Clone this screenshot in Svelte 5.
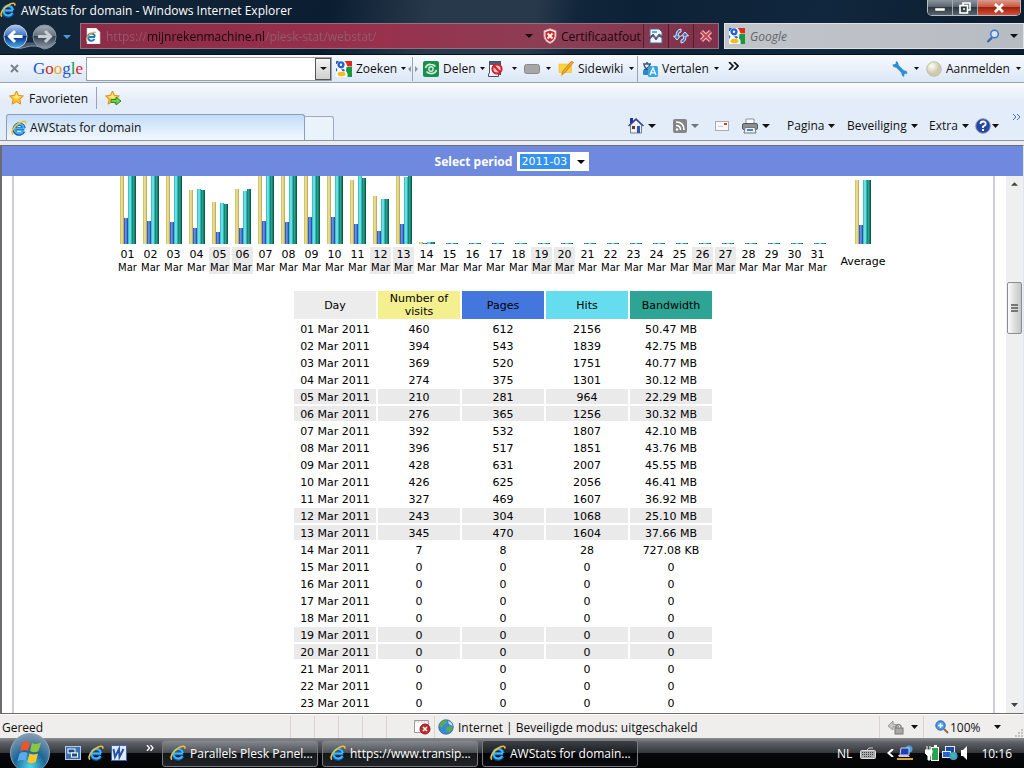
<script>
  const days = [
    { visits: 460, pages: 612, hits: 2156, bandwidth: '50.47 MB', bars: [76, 26, 76, 76] },
    { visits: 394, pages: 543, hits: 1839, bandwidth: '42.75 MB', bars: [76, 23, 76, 76] },
    { visits: 369, pages: 520, hits: 1751, bandwidth: '40.77 MB', bars: [74, 22, 74, 74] },
    { visits: 274, pages: 375, hits: 1301, bandwidth: '30.12 MB', bars: [54, 16, 55, 54] },
    { visits: 210, pages: 281, hits: 964, bandwidth: '22.29 MB', bars: [42, 12, 41, 40] },
    { visits: 276, pages: 365, hits: 1256, bandwidth: '30.32 MB', bars: [55, 16, 53, 55] },
    { visits: 392, pages: 532, hits: 1807, bandwidth: '42.10 MB', bars: [76, 23, 76, 76] },
    { visits: 396, pages: 517, hits: 1851, bandwidth: '43.76 MB', bars: [76, 22, 76, 76] },
    { visits: 428, pages: 631, hits: 2007, bandwidth: '45.55 MB', bars: [76, 27, 76, 76] },
    { visits: 426, pages: 625, hits: 2056, bandwidth: '46.41 MB', bars: [76, 27, 76, 76] },
    { visits: 327, pages: 469, hits: 1607, bandwidth: '36.92 MB', bars: [64, 20, 68, 66] },
    { visits: 243, pages: 304, hits: 1068, bandwidth: '25.10 MB', bars: [48, 13, 45, 45] },
    { visits: 345, pages: 470, hits: 1604, bandwidth: '37.66 MB', bars: [68, 20, 67, 68] },
    { visits: 7, pages: 8, hits: 28, bandwidth: '727.08 KB', bars: [2, 1, 2, 2] }
  ];
  const empty = { visits: 0, pages: 0, hits: 0, bandwidth: '0', bars: [0, 1, 1, 1] };

  const month = Array.from({ length: 31 }, (_, i) => ({
    day: String(i + 1).padStart(2, '0'),
    weekend: [0, 6].includes(new Date(2011, 2, i + 1).getDay()),
    ...(days[i] ?? empty)
  }));

  const colors = ['visits', 'pages', 'hits', 'bandwidth'];
  const average = [64, 19, 64, 64];
  const tasks = ['Parallels Plesk Panel...', 'https://www.transip...', 'AWStats for domain...'];

  let url = $state('https://mijnrekenmachine.nl/plesk-stat/webstat/');
  let query = $state('');
  let term = $state('');
  let period = $state('2011-03');
  let activeTask = $state(2);
</script>

{#snippet ie()}
  <svg width="16" height="16" viewBox="0 0 16 16" aria-hidden="true">
    <path d="M3.4 8.8h9.9M12.7 11.2A5 5 0 1 1 13.1 8.3" fill="none" stroke="#0b58a8" stroke-width="3.4" />
    <path d="M4 8.6h9M12.4 11A4.8 4.8 0 1 1 12.9 8" fill="none" stroke="#45b4f3" stroke-width="2" />
    <path d="M2 14.6C-.6 12.6 2.6 6.4 8 3.2 12 .8 15.4.4 14.8 3.6" fill="none" stroke="#f5c02c" stroke-width="1.6" />
  </svg>
{/snippet}

{#snippet arrow(size = 7, color = '#111')}
  <svg class="arrow" width={size} height="4" viewBox="0 0 8 4" preserveAspectRatio="none" aria-hidden="true">
    <path d="M0 0h8L4 4z" fill={color} />
  </svg>
{/snippet}

{#snippet google()}
  <svg width="16" height="16" viewBox="0 0 16 16" aria-hidden="true">
    <rect width="16" height="16" fill="#fff" />
    <path d="M8.5 0H16v5.500h-4.500Q11 2 8.500 0z" fill="#e5281e" />
    <path d="M10.500 6H16v10h-4.500q1-3-1.500-6z" fill="#159a3c" />
    <path d="M0 0h3L1 3H0z" fill="#2c62cf" />
    <circle cx="5" cy="3.800" r="2.400" fill="none" stroke="#2563d4" stroke-width="2.400" />
    <path d="M0 6.500L1.500 9 0 11z" fill="#2c62cf" />
    <path d="M5 8.500l3-.5 1 2-2 .5z" fill="#2563d4" />
    <ellipse cx="5.500" cy="13" rx="4" ry="2.300" fill="#f6bc1a" />
  </svg>
{/snippet}

{#snippet star()}
  <path d="M7.5 1l2 4.4 4.8.6-3.5 3.3.9 4.8-4.2-2.4-4.3 2.4.9-4.8L.6 6l4.8-.6z" fill="#ffc62b" stroke="#e08a18" />
  <path d="M7.5 3l1.3 3.2 3.4.4-4.7 2.2L3 6.7l3.2-.5z" fill="#ffe88a" />
{/snippet}

{#snippet bars(heights)}
  <div class="bars">
    {#each heights as h, i}
      <span class="bar {colors[i]}" style="height: {h}px"></span>
    {/each}
  </div>
{/snippet}

<div class="window">
  <div class="glass">
    <header class="titlebar">
      {@render ie()}
      <h1>AWStats for domain - Windows Internet Explorer</h1>
      <div class="caption">
        <button aria-label="Minimaliseren">
          <svg width="12" height="12" viewBox="0 0 12 12"><rect x="1" y="6" width="10" height="3" fill="#fff" stroke="#444" stroke-width=".5" /></svg>
        </button>
        <button aria-label="Verkleinen">
          <svg width="12" height="12" viewBox="0 0 12 12" fill="none" stroke="#fff" stroke-width="1.6"><path d="M4 3V1h7v7H9" /><rect x="1" y="3.5" width="7.5" height="7.5" /><path d="M4 7h2" /></svg>
        </button>
        <button class="close" aria-label="Sluiten">
          <svg width="12" height="12" viewBox="0 0 12 12"><path d="M2 2l8 8M10 2l-8 8" stroke="#fff" stroke-width="2.6" /></svg>
        </button>
      </div>
    </header>

    <div class="navigation">
      <div class="travel">
        <svg width="76" height="28" viewBox="0 0 76 28" aria-hidden="true">
          <defs>
            <linearGradient id="back" x2="0" y2="1"><stop stop-color="#a9c8ee" /><stop offset=".45" stop-color="#3f74c4" /><stop offset=".5" stop-color="#082d84" /><stop offset="1" stop-color="#43b6f3" /></linearGradient>
            <linearGradient id="forward" x2="0" y2="1"><stop stop-color="#a3adb8" /><stop offset=".48" stop-color="#67727e" /><stop offset=".5" stop-color="#36424f" /><stop offset="1" stop-color="#8b98a4" /></linearGradient>
          </defs>
          <path d="M8 20q8 8 18 4 10-3 18 2 8-1 12-7" fill="#4b5b6b" stroke="#8997a6" />
          <circle cx="15.5" cy="13.500" r="11.500" fill="url(#back)" stroke="#bdcde0" />
          <circle cx="44.500" cy="13.500" r="11.500" fill="url(#forward)" stroke="#8493a1" />
          <path d="M22.500 13.500H10M15 8l-5.500 5.500L15 19" fill="none" stroke="#fff" stroke-width="3" />
          <path d="M38 13.500h12.500M45 8l5.500 5.500L45 19" fill="none" stroke="#c6ced6" stroke-width="3" />
          <path d="M63 12h8l-4 4z" fill="#4d9bd8" />
        </svg>
      </div>
      <div class="address">
        <svg width="16" height="16" viewBox="0 0 16 16" aria-hidden="true">
          <path d="M2 0h9l4 4v12H2z" fill="#fff" stroke="#c9c9c9" stroke-width=".6" />
          <path d="M3 9h7M9.500 11A3.600 3.600 0 1 1 10 8.600" fill="none" stroke="#1c78c8" stroke-width="1.900" />
          <path d="M1.500 13Q1 9 6 5.500 10 3 11 5" fill="none" stroke="#f0b52a" stroke-width="1.100" />
        </svg>
        <input class="url" aria-label="Adres" bind:value={url} />
        {@render arrow(8)}
        <button class="certificate">
          <svg width="14" height="16" viewBox="0 0 14 16" aria-hidden="true">
            <path d="M7 .8l6 2v5q0 5-6 7.600Q1 12.800 1 7.800v-5z" fill="#fff" stroke="#c8a5a5" />
            <path d="M7 2.500l4.600 1.500v4q0 3.800-4.600 6-4.600-2.200-4.600-6V4z" fill="#d4262d" />
            <path d="M4.500 5.500l5 5M9.500 5.500l-5 5" stroke="#fff" stroke-width="1.800" />
          </svg>
          Certificaatfout
        </button>
        <button class="square" aria-label="Compatibiliteitsweergave">
          <svg width="14" height="16" viewBox="0 0 14 16"><path d="M1 1h9l3 3v4l-3-2-3 4-3-4-3 3z" fill="#eef5fb" stroke="#4b6b90" /><path d="M1 11l3-3 3 4 3-4 3 2v5H1z" fill="#eef5fb" stroke="#4b6b90" /><path d="M3 3h5v2H3z" fill="#56aee0" /></svg>
        </button>
        <button class="square" aria-label="Vernieuwen">
          <svg width="16" height="16" viewBox="0 0 16 16" stroke="#e6f0fc" stroke-width=".9" fill="#3e78c8"><path d="M8 1v3Q5 4 5 8h2.500L4 12 .5 8H3Q3 1.500 8 1z" /><path d="M8 15v-3q3 0 3-4H8.500L12 4l3.500 4H13q0 6.500-5 7z" /></svg>
        </button>
        <button class="square" aria-label="Stoppen">
          <svg width="14" height="14" viewBox="0 0 14 14"><path d="M2.500 2.500l9 9M11.500 2.500l-9 9" stroke="#f1c7c7" stroke-width="4.200" /><path d="M2.500 2.500l9 9M11.500 2.500l-9 9" stroke="#c54850" stroke-width="2.200" /></svg>
        </button>
      </div>
      <div class="search">
        {@render google()}
        <input aria-label="Zoeken" placeholder="Google" bind:value={query} />
        <svg width="14" height="14" viewBox="0 0 14 14" aria-hidden="true"><path d="M6 8.500L1.500 13" stroke="#3566b5" stroke-width="2.400" /><circle cx="8.500" cy="5" r="3.800" fill="#d5e6f8" stroke="#3f75c6" stroke-width="1.500" /></svg>
        {@render arrow(8)}
      </div>
    </div>
  </div>

  <div class="google-bar">
    <button class="dismiss" aria-label="Werkbalk sluiten">
      <svg width="9" height="9" viewBox="0 0 9 9"><path d="M1 1l7 7M8 1L1 8" stroke="#7c8087" stroke-width="2" /></svg>
    </button>
    <div class="logo"><span class="blue">G</span><span class="red">o</span><span class="yellow">o</span><span class="blue">g</span><span class="green">l</span><span class="red">e</span></div>
    <div class="combo">
      <input aria-label="Google zoekterm" bind:value={term} />
      <button aria-label="Zoekgeschiedenis">{@render arrow(7)}</button>
    </div>
    <button class="tool">{@render google()}Zoeken{@render arrow(5)}</button>
    <svg width="12" height="24" viewBox="0 0 12 24" aria-hidden="true"><path d="M5.500 0v24" stroke="#9da5b0" /><path d="M4 9v6l-3-3zM8 9v6l3-3z" fill="#8d949d" /></svg>
    <button class="tool">
      <svg width="16" height="16" viewBox="0 0 16 16" aria-hidden="true"><rect width="16" height="16" rx="2" fill="#1b8f49" /><path d="M2.500 7Q4 3 8 3.500q3 0 4.500 2M13.500 9q-1.500 4-5.500 3.500-3 0-4.500-2" fill="none" stroke="#d2f0dc" stroke-width="1.700" /><circle cx="8" cy="8" r="2.200" fill="none" stroke="#d2f0dc" stroke-width="1.400" /></svg>
      Delen{@render arrow(5)}
    </button>
    <button class="tool" aria-label="Pop-ups">
      <svg width="16" height="16" viewBox="0 0 16 16" aria-hidden="true"><rect x="1.500" y=".5" width="11" height="13" fill="#fff" stroke="#44536c" /><path d="M2 1h10v3H2z" fill="#4a5e83" /><path d="M.5 12.500v3h10v-3" fill="#eef" stroke="#44536c" /><circle cx="9" cy="8" r="4.600" fill="#f6caca" stroke="#d1202a" stroke-width="2" /><path d="M5.800 4.800l6.400 6.400" stroke="#d1202a" stroke-width="2" /></svg>
      {@render arrow(5)}
    </button>
    <button class="tool" aria-label="PageRank">
      <svg width="17" height="16" viewBox="0 0 17 16" aria-hidden="true"><rect x=".5" y="3.500" width="15" height="9" rx="2" fill="#a6a6a6" stroke="#8a8a8a" /></svg>
      {@render arrow(5)}
    </button>
    <button class="tool">
      <svg width="16" height="16" viewBox="0 0 16 16" aria-hidden="true"><path d="M1 3h12.500v8.500H6L3.500 15 4 11.500H1z" fill="#f8d53c" stroke="#eebd2c" stroke-width=".6" /><path d="M13.500 0L15.500 1.500 6.500 12 4 13.500l.5-3z" fill="#f5a431" stroke="#b9741b" stroke-width=".7" /></svg>
      Sidewiki{@render arrow(5)}
    </button>
    <i class="rule"></i>
    <button class="tool">
      <svg width="16" height="16" viewBox="0 0 16 16" aria-hidden="true"><path d="M1 3h8M5 1v2M2 9q5-2 6-6M2 4q2 5 6 6" fill="none" stroke="#35567a" stroke-width="1.500" /><rect x="1" y="9" width="6" height="5" rx="1" fill="#2b88c4" /><rect x="6" y="5" width="10" height="11" rx="1.500" fill="#39a7e4" /><path d="M8 14l3-7 3 7M9 11.800h4" fill="none" stroke="#fff" stroke-width="1.300" /></svg>
      Vertalen{@render arrow(5)}
    </button>
    <button class="more" aria-label="Meer">
      <svg width="11" height="8" viewBox="0 0 11 8"><path d="M1 0l4 4-4 4M6 0l4 4-4 4" fill="none" stroke="#111" stroke-width="1.700" /></svg>
    </button>
    <span></span>
    <button class="tool" aria-label="Opties">
      <svg width="16" height="16" viewBox="0 0 16 16" aria-hidden="true"><path d="M4 4l8 8" stroke="#2d8fd0" stroke-width="3.400" /><path d="M4 0L3.500 3 .5 3.500Q1 7 4 6.500 7 6 6.500 3 6 .5 4 0zM12 16l.5-3 3-.5Q15 9 12 9.500 9 10 9.500 13q.5 2.500 2.500 3z" fill="#2d8fd0" /></svg>
      {@render arrow(5)}
    </button>
    <button class="tool">
      <svg width="16" height="16" viewBox="0 0 16 16" aria-hidden="true"><defs><radialGradient id="pearl" cx=".35" cy=".3"><stop stop-color="#fffef4" /><stop offset="1" stop-color="#cfc9ad" /></radialGradient></defs><circle cx="8" cy="8" r="7.300" fill="url(#pearl)" stroke="#b9b6a8" stroke-width=".8" /></svg>
      Aanmelden{@render arrow(5)}
    </button>
  </div>

  <div class="favorites">
    <button><svg width="16" height="16" viewBox="0 0 16 16" aria-hidden="true">{@render star()}</svg>Favorieten</button>
    <i class="rule"></i>
    <button aria-label="Toevoegen aan favorieten">
      <svg width="16" height="16" viewBox="0 0 16 16">{@render star()}<path d="M6 9.500h5V7l5 4-5 4v-2.500H6z" fill="#6fce4c" stroke="#2c8b24" /></svg>
    </button>
  </div>

  <div class="tab-row">
    <button class="tab">{@render ie()}AWStats for domain</button>
    <button class="new-tab" aria-label="Nieuw tabblad"></button>
    <nav class="commands">
      <button aria-label="Startpagina">
        <svg width="16" height="17" viewBox="0 0 16 17" aria-hidden="true"><path d="M2.500 8v8h11V8L8 3z" fill="#f1f0ea" stroke="#77808c" /><path d="M2 1h3v4L2 7z" fill="#26309f" /><path d="M.5 9L8 2l7.500 7" fill="none" stroke="#2c42a8" stroke-width="1.400" /><rect x="4" y="9" width="3" height="3" fill="#444" /><rect x="9" y="9" width="3" height="7" fill="#3353b4" /></svg>
        {@render arrow(8)}
      </button>
      <button aria-label="Feeds">
        <svg width="14" height="14" viewBox="0 0 14 14" aria-hidden="true"><rect width="14" height="14" rx="2" fill="#858585" /><path d="M3 3q8 0 8 8M3 6.500q4.500 0 4.500 4.500" fill="none" stroke="#fff" stroke-width="1.600" /><circle cx="4" cy="10.500" r="1.200" fill="#fff" /></svg>
        {@render arrow(8, '#70757c')}
      </button>
      <button class="mail" aria-label="E-mail lezen">
        <svg width="14" height="12" viewBox="0 0 14 12" aria-hidden="true"><rect x=".5" y="1.500" width="13" height="9" fill="#f8f8f8" stroke="#a9adb3" /><path d="M9 3h3v2H9z" fill="#d23a3a" /><path d="M3 6.500h5" stroke="#ccd" /></svg>
      </button>
      <button aria-label="Afdrukken">
        <svg width="16" height="16" viewBox="0 0 16 16" aria-hidden="true"><path d="M4 6V1h8v5" fill="#fff" stroke="#8b8f95" /><rect x=".5" y="5.500" width="15" height="6" rx="1.500" fill="#8b8e93" stroke="#55585c" /><path d="M3 9.500h10l1 5.500H2z" fill="#eceef1" stroke="#77797d" /><path d="M5 11h6v2H5z" fill="#4a88c2" /></svg>
        {@render arrow(8)}
      </button>
      <button>Pagina{@render arrow()}</button>
      <button>Beveiliging{@render arrow()}</button>
      <button>Extra{@render arrow()}</button>
      <button class="help" aria-label="Help">
        <svg width="16" height="16" viewBox="0 0 16 16" aria-hidden="true"><circle cx="8" cy="8" r="7.300" fill="#2547a6" stroke="#8b97b8" /><path d="M5.500 6q0-2.500 2.600-2.500T10.700 6Q10.700 7.500 8 8.500V10" fill="none" stroke="#fff" stroke-width="1.800" /><rect x="7" y="11" width="2" height="2" fill="#fff" /></svg>
        {@render arrow()}
      </button>
      <button class="overflow" aria-label="Meer opdrachten">
        <svg width="9" height="6" viewBox="0 0 9 6"><path d="M1 0l3 3-3 3M5 0l3 3-3 3" fill="none" stroke="#4a67b5" /></svg>
      </button>
    </nav>
  </div>

  <div class="page">
    <form class="period">
      <label for="period">Select period</label>
      <div class="picker">
        <select id="period" bind:value={period}><option>2011-03</option></select>
        {@render arrow(8, '#000')}
      </div>
    </form>

    <div class="viewport">
      <main>
        <div class="chart">
          {#each month as d}
            <div class="column">
              {@render bars(d.bars)}
              <div class="label" class:weekend={d.weekend}>{d.day}<small>Mar</small></div>
            </div>
          {/each}
          <div class="column average">
            {@render bars(average)}
            <div class="label">Average</div>
          </div>
        </div>

        <table>
          <thead>
            <tr>
              <th>Day</th>
              <th class="visits">Number of visits</th>
              <th class="pages">Pages</th>
              <th class="hits">Hits</th>
              <th class="bandwidth">Bandwidth</th>
            </tr>
          </thead>
          <tbody>
            {#each month.slice(0, 23) as d}
              <tr class:weekend={d.weekend}>
                <td>{d.day} Mar 2011</td>
                <td>{d.visits}</td>
                <td>{d.pages}</td>
                <td>{d.hits}</td>
                <td>{d.bandwidth}</td>
              </tr>
            {/each}
          </tbody>
        </table>
      </main>
      <div class="scrollbar">
        <svg width="7" height="4" viewBox="0 0 8 4" aria-hidden="true"><path d="M0 4h8L4 0z" fill="#444" /></svg>
        <div class="track"><div class="thumb"><i></i><i></i><i></i></div></div>
        {@render arrow(7, '#444')}
      </div>
    </div>
  </div>

  <footer class="status">
    <span class="message">Gereed</span>
    <span></span><span></span><span></span><span></span>
    <span class="blocked">
      <svg width="18" height="16" viewBox="0 0 18 16" aria-hidden="true"><path d="M1.500 1.500h14v12h-14z" fill="#fff" stroke="#9a9a9a" /><path d="M1.500 3h14" stroke="#b8bcc4" stroke-dasharray="2 1" /><circle cx="12" cy="10" r="5" fill="#c22a2e" stroke="#8e1c20" /><path d="M10 8l4 4M14 8l-4 4" stroke="#fff" stroke-width="1.500" /></svg>
    </span>
    <span class="zone">
      <svg width="16" height="16" viewBox="0 0 16 16" aria-hidden="true"><circle cx="8" cy="8" r="7.300" fill="#3a86d8" stroke="#3b5f8d" stroke-width=".7" /><path d="M3 3q3-2.500 6-1.500L8 5 5 6 4 9 1.500 7.500zM9 8l4-1 1.500 2-3 4.500-2-.5-1.500-3z" fill="#55b04b" /><path d="M10 2q4 1 4.500 5L11 5z" fill="#d6edf8" /></svg>
      Internet | Beveiligde modus: uitgeschakeld
    </span>
    <span class="lock">
      <svg width="17" height="16" viewBox="0 0 17 16" aria-hidden="true"><path d="M1 7l5-5v3q5 0 6 3l-6 0v3z" fill="#c4c6c8" stroke="#999" /><path d="M9 9V7q2.500-3 5 0v2" fill="none" stroke="#888" stroke-width="1.400" /><rect x="8" y="9" width="8" height="6" fill="#a8a8a8" stroke="#777" /></svg>
      {@render arrow(7)}
    </span>
    <span class="zoom">
      <svg width="14" height="14" viewBox="0 0 14 14" aria-hidden="true"><path d="M9 9l4 4" stroke="#8a6a3c" stroke-width="2" /><circle cx="5.500" cy="5.500" r="4.700" fill="#4b9be6" stroke="#2a62b0" /><path d="M5.500 3v5M3 5.500h5" stroke="#fff" stroke-width="1.500" /></svg>
      100%{@render arrow(7)}
      <svg class="grip" width="10" height="10" viewBox="0 0 10 10" aria-hidden="true"><path d="M7 1h2v2H7zM7 4h2v2H7zM7 7h2v2H7zM4 4h2v2H4zM4 7h2v2H4zM1 7h2v2H1z" fill="#c4c1be" /></svg>
    </span>
  </footer>

  <div class="taskbar">
    <button class="start" aria-label="Start">
      <svg width="42" height="42" viewBox="0 0 42 42">
        <defs><radialGradient id="orb" cx=".5" cy=".85" r=".8"><stop stop-color="#4fd6ea" /><stop offset=".5" stop-color="#1d6597" /><stop offset="1" stop-color="#7f98ae" /></radialGradient></defs>
        <circle cx="21" cy="21" r="19.500" fill="url(#orb)" stroke="#8fa6b8" />
        <path d="M13 11q4-3 8-.5l-2 8.500q-4-2-8 .5z" fill="#ee5426" />
        <path d="M23 11q4 2 9-.5l-2.500 8.500q-4 2.500-8.500 0z" fill="#8cc63e" />
        <path d="M10.500 21.500q4-2.500 8-.5L16.500 29q-4-2-8 .5z" fill="#5aaaf0" />
        <path d="M20.500 21.500q4 2 8.500 0L26.800 30q-4 2.500-8.500 0z" fill="#fdc62f" />
      </svg>
    </button>
    <div class="quick">
      <button aria-label="Bureaublad weergeven">
        <svg width="16" height="14" viewBox="0 0 16 14"><rect x=".5" y=".5" width="15" height="13" fill="#3a72b4" stroke="#b4cbe4" /><rect x="3" y="3" width="7" height="4" fill="#1d4a86" stroke="#fff" /><rect x="6.500" y="7" width="6" height="4" fill="#1d4a86" stroke="#fff" /></svg>
      </button>
      <button aria-label="Internet Explorer">{@render ie()}</button>
      <button aria-label="Word">
        <svg width="16" height="16" viewBox="0 0 16 16"><rect x=".5" y=".5" width="15" height="15" fill="#dfeaf8" stroke="#3d66ac" /><path d="M2.500 4l1.500 8 4-8 .5 8 4-8" fill="none" stroke="#2452a4" stroke-width="2" /></svg>
      </button>
      <button class="chevron" aria-label="Meer">
        <svg width="8" height="6" viewBox="0 0 8 6"><path d="M1 0l2.500 3L1 6M4.500 0L7 3 4.500 6" fill="none" stroke="#fff" stroke-width="1.300" /></svg>
      </button>
    </div>
    {#each tasks as task, i}
      <button class="task" class:active={i === activeTask} onclick={() => (activeTask = i)}>{@render ie()}{task}</button>
    {/each}
    <div class="tray">
      <span class="language">NL</span>
      <svg width="16" height="12" viewBox="0 0 16 12" aria-hidden="true"><path d="M7 3q1-3 6-2" fill="none" stroke="#ccc" /><rect x=".5" y="3.500" width="15" height="8" rx="1" fill="#aaa" stroke="#ddd" /><path d="M2 5.500h12M2 7.500h12M4 9.500h8" stroke="#444" stroke-dasharray="1 1" /></svg>
      <svg class="expand" width="7" height="8" viewBox="0 0 7 8" aria-hidden="true"><path d="M6 0L1.500 4 6 8" fill="none" stroke="#fff" stroke-width="2" /></svg>
      <svg width="16" height="16" viewBox="0 0 16 16" aria-hidden="true"><circle cx="12" cy="4" r="3.500" fill="#45a2dc" /><path d="M4 3h8v7H3z" fill="#1f3fb4" stroke="#cfd8ea" /><path d="M1 10h10l2 2H2z" fill="#c7ccd6" /><path d="M0 14h16" stroke="#e0a02c" stroke-width="2" /></svg>
      <svg class="power" width="14" height="16" viewBox="0 0 14 16" aria-hidden="true"><rect x="6.500" y="2.500" width="7" height="13" fill="#2ba24d" stroke="#fff" /><path d="M9 1h3" stroke="#fff" stroke-width="2" /><path d="M2 1v4M5 1v4M0 5h7v3L5 11v4H3v-4L0 8z" fill="#fff" stroke="#fff" /></svg>
      <svg width="16" height="16" viewBox="0 0 16 16" aria-hidden="true"><rect x="3.500" y="1.500" width="9" height="7" fill="#1948ae" stroke="#e4ecf8" /><rect x=".5" y="6.500" width="8" height="6" fill="#2a62c8" stroke="#e4ecf8" /><circle cx="11.500" cy="11" r="4" fill="#38a3d4" /><path d="M10 8l3 2-2 4z" fill="#55c254" /></svg>
      <svg width="8" height="14" viewBox="0 0 8 14" aria-hidden="true"><path d="M0 4h2l4-4v14l-4-4H0z" fill="#fff" /></svg>
      <time>10:16</time>
    </div>
  </div>
</div>

<style>
  :global(body) {
    margin: 0;
    background: #0b1b2b;
    font-family: "Open Sans", "Noto Sans", sans-serif;
    font-size: 12px;
    color: #111;
  }

  .window {
    height: 100vh;
    display: flex;
    flex-direction: column;
    overflow: hidden;
    white-space: nowrap;
    background: #e9edf3;
  }

  svg {
    display: block;
    flex: none;
  }

  button {
    border: 0;
    padding: 0;
    background: none;
    font: inherit;
    color: inherit;
    display: flex;
    align-items: center;
  }

  input {
    min-width: 0;
    border: 0;
    padding: 0;
    outline: 0;
    background: none;
    font: inherit;
  }

  .rule {
    width: 1px;
    height: 22px;
    background: #9aa4b2;
  }

  /* title and address */
  .glass {
    flex: none;
    background: linear-gradient(100deg, #14283c 0%, #0b1e31 32%, #28394b 42%, #28394b 52%, #12263b 56%, #0d2136 62%, #11273d 80%, #0b1c2d 100%);
    border-bottom: 1px solid #05101c;
    padding-bottom: 4px;
  }

  .titlebar {
    display: flex;
    align-items: center;
    height: 20px;
    gap: 5px;
    padding-right: 3px;
    margin-bottom: 3px;
  }

  h1 {
    margin: 0;
    font-size: 12px;
    font-weight: 400;
    color: #fff;
  }

  .caption {
    display: flex;
    align-self: flex-start;
    margin-left: auto;
    border: 1px solid #b6bdc4;
    border-top: 0;
    border-radius: 0 0 5px 5px;
    overflow: hidden;
  }

  .caption button {
    width: 25px;
    height: 15px;
    justify-content: center;
    border-right: 1px solid #a4abb3;
    background: linear-gradient(#8c959d, #5a646e 45%, #2d3843 50%, #59646f);
  }

  .caption .close {
    width: 42px;
    border: 0;
    background: linear-gradient(#dc9a8c, #c55a44 45%, #a5200c 50%, #d2513a);
  }

  .navigation {
    display: flex;
    height: 27px;
  }

  .travel {
    width: 80px;
    flex: none;
  }

  .address {
    flex: 1;
    display: flex;
    align-items: center;
    height: 26px;
    padding-left: 4px;
    margin-right: 5px;
    border: 1px solid #8f7380;
    background: linear-gradient(90deg, #8c2c47, #99304c 45%, #8b3f55 75%, #80304a);
    box-sizing: border-box;
  }

  .url {
    flex: 1;
    height: 20px;
    margin-left: 5px;
    color: transparent;
    background: linear-gradient(90deg, #8e5d70 0 42px, #14060b 42px 159px, #8e5d70 159px);
    background-clip: text;
  }

  .certificate {
    gap: 4px;
    width: 100px;
    margin-left: 10px;
    color: #1c060e;
  }

  .square {
    width: 25px;
    height: 24px;
    justify-content: center;
    border-left: 1px solid #5a1d30;
  }

  .search {
    width: 300px;
    height: 26px;
    padding: 0 5px 0 4px;
    display: flex;
    align-items: center;
    gap: 5px;
    background: linear-gradient(90deg, #c2c5c9, #b7bcc2);
    border: 1px solid #dfe2e6;
    box-sizing: border-box;
  }

  .search input {
    flex: 1;
    font-style: italic;
  }

  .search input::placeholder {
    color: #60656b;
  }

  .search .arrow {
    margin-left: 5px;
  }

  /* toolbars */
  .google-bar {
    flex: none;
    display: grid;
    grid-template-columns: 28px 58px 246px 75px 12px 65px 36px 34px 83px 1px 84px 20px 1fr 34px 102px;
    align-items: center;
    height: 27px;
    background: linear-gradient(#f7fafe, #dbe7f6);
    border-bottom: 1px solid #98a3b1;
  }

  .dismiss {
    justify-content: center;
  }

  .logo {
    padding-left: 5px;
    font: 17px/22px "Liberation Serif", serif;
  }

  .blue { color: #2358c8; }
  .red { color: #d42a2a; }
  .yellow { color: #e8ac12; }
  .green { color: #1a9444; }

  .combo {
    display: flex;
    height: 24px;
    box-sizing: border-box;
    background: #fff;
    border: 1px solid #9aa0a8;
  }

  .combo input {
    flex: 1;
  }

  .combo button {
    width: 16px;
    justify-content: center;
    background: linear-gradient(#f4f4f4, #cfcfcf);
    border: 1px solid #555;
  }

  .tool {
    gap: 4px;
    padding: 0 3px 0 4px;
  }

  .tool .arrow {
    margin-left: auto;
  }

  .google-bar .arrow {
    height: 3px;
  }

  .google-bar .rule {
    height: 26px;
  }

  .more {
    padding: 0 0 6px 6px;
  }

  .favorites {
    flex: none;
    display: flex;
    align-items: center;
    gap: 8px;
    height: 30px;
    padding-left: 9px;
    background: linear-gradient(#f8fbff, #e3edf9 60%);
  }

  .favorites button {
    gap: 4px;
  }

  /* tabs and command bar */
  .tab-row {
    flex: none;
    display: flex;
    align-items: flex-end;
    height: 27px;
    padding-left: 6px;
    background: #e3edf9;
    border-bottom: 1px solid #8b97a6;
  }

  .tab {
    width: 299px;
    height: 26px;
    padding-left: 4px;
    gap: 3px;
    box-sizing: border-box;
    border: 1px solid #8d9db2;
    border-bottom: 0;
    border-radius: 3px 3px 0 0;
    background: linear-gradient(#c3dcfa, #f3f8fe);
  }

  .new-tab {
    width: 29px;
    height: 24px;
    box-sizing: border-box;
    border: 1px solid #9dabbe;
    border-left: 0;
    border-bottom: 0;
    border-radius: 0 3px 0 0;
    background: #eaf2fc;
  }

  .commands {
    display: grid;
    grid-template-columns: 45px 42px 27px 45px 60px 82px 46px 37px 12px;
    height: 26px;
    margin-left: auto;
    padding-bottom: 3px;
    box-sizing: border-box;
  }

  .commands button {
    gap: 4px;
  }

  .commands .help {
    gap: 1px;
  }

  .commands .overflow {
    align-self: start;
  }

  /* web page */
  .page {
    flex: 1;
    min-height: 0;
    display: flex;
    flex-direction: column;
    margin-top: 4px;
    border: 1px solid #6a6c70;
    border-width: 1px 1px 1px 2px;
    border-right-color: #dfe6f0;
    background: #fff;
    font-family: "DejaVu Sans", Verdana, sans-serif;
    font-size: 11px;
    color: #000;
  }

  .period {
    flex: none;
    display: flex;
    align-items: center;
    justify-content: center;
    gap: 5px;
    height: 30px;
    padding-right: 1px;
    background: #6e89dd;
  }

  .period label {
    font: bold 12px "Noto Sans", "DejaVu Sans", sans-serif;
    color: #fff;
  }

  .picker {
    position: relative;
  }

  .picker select {
    display: block;
    appearance: none;
    width: 72px;
    height: 19px;
    padding: 0 4px;
    border: 0;
    border-radius: 0;
    outline: 0;
    font: 11px "DejaVu Sans", Verdana, sans-serif;
    color: #fff;
    background: #fff linear-gradient(#3592ee, #3592ee) 3px 2px / 50px 15px no-repeat;
  }

  .picker .arrow {
    position: absolute;
    right: 4px;
    top: 8px;
    pointer-events: none;
  }

  .viewport {
    flex: 1;
    min-height: 0;
    display: flex;
    overflow: hidden;
  }

  main {
    flex: 1;
    margin: 0 11px 0 10px;
    padding-right: 1px;
    border: solid #ccccdd;
    border-width: 0 2px;
  }

  .chart {
    display: flex;
    justify-content: center;
    gap: 2px;
  }

  .column {
    width: 21px;
  }

  .bars {
    display: flex;
    align-items: flex-end;
    justify-content: center;
    height: 68px;
    margin-bottom: 3px;
    overflow: hidden;
  }

  .bar {
    flex: none;
    width: 4px;
  }

  .bar.visits { background: linear-gradient(90deg, #c9b75a, #f2e9a0 50%, #b09c48); }
  .bar.pages { background: linear-gradient(90deg, #1d49b4, #6f9cf2 45%, #1a3c98); }
  .bar.hits { background: linear-gradient(90deg, #2bb0b8, #7df1f6 50%, #1aa0a4); }
  .bar.bandwidth { background: linear-gradient(90deg, #0f7a6a, #27a48c 40%, #04493d); }

  .label {
    height: 27px;
    line-height: 16px;
    text-align: center;
  }

  .label small {
    display: block;
    font-size: 10px;
    line-height: 10px;
  }

  .label.weekend {
    background: #eaeaea;
  }

  .average {
    width: 52px;
    margin-left: 7px;
  }

  .average .label {
    line-height: 29px;
  }

  table {
    margin: 15px auto 0;
    width: 422px;
    table-layout: fixed;
    border-spacing: 2px;
    text-align: center;
  }

  th,
  td {
    padding: 0;
    height: 15px;
    line-height: 13px;
    font-weight: 400;
  }

  td {
    padding-top: 1px;
    box-sizing: border-box;
  }

  th {
    height: 28px;
    padding: 0 6px;
    box-sizing: border-box;
    white-space: normal;
    background: #ececec;
  }

  th.visits { background: #f4f090; }
  th.pages { background: #4477dd; }
  th.hits { background: #66ddee; }
  th.bandwidth { background: #2ea495; }

  .weekend td {
    background: #eaeaea;
  }

  .scrollbar {
    width: 17px;
    display: flex;
    flex-direction: column;
    align-items: center;
    padding: 6px 0;
    box-sizing: border-box;
    background: #efefef;
  }

  .track {
    flex: 1;
    width: 15px;
    padding-top: 96px;
  }

  .thumb {
    height: 52px;
    display: flex;
    flex-direction: column;
    align-items: center;
    justify-content: center;
    gap: 1px;
    box-sizing: border-box;
    border: 1px solid #8e8e8e;
    border-radius: 2px;
    background: linear-gradient(90deg, #fbfbfb, #dedede 50%, #c6c6c6);
  }

  .thumb i {
    width: 7px;
    height: 2px;
    background: #777;
  }

  /* status bar */
  .status {
    flex: none;
    display: grid;
    grid-template-columns: 290px repeat(4, 24px) 48px 1fr 44px 101px;
    align-items: center;
    height: 22px;
    padding-top: 1px;
    background: #f0eeed;
    border-top: 1px solid #fff;
  }

  .status span {
    display: flex;
    align-items: center;
    gap: 4px;
    height: 22px;
    border-left: 1px solid #d8d5d3;
    box-sizing: border-box;
  }

  .status .message {
    border: 0;
    padding-left: 2px;
  }

  .status .blocked {
    justify-content: flex-end;
    padding-right: 3px;
  }

  .zone {
    padding-left: 3px;
  }

  .lock {
    padding-left: 7px;
  }

  .lock .arrow {
    margin-left: 3px;
  }

  .zoom {
    padding-left: 11px;
  }

  .status .zoom {
    gap: 1px;
  }

  .zoom .arrow {
    margin-left: 12px;
  }

  .grip {
    align-self: flex-end;
    margin-left: auto;
  }

  /* taskbar */
  .taskbar {
    flex: none;
    display: flex;
    align-items: center;
    gap: 4px;
    height: 30px;
    position: relative;
    color: #fff;
    background: linear-gradient(#8a8e92, #5d6165 15%, #34383c 49%, #07090b 50%, #020305);
  }

  .start {
    position: absolute;
    left: 9px;
    top: -6px;
  }

  .quick {
    flex: none;
    display: flex;
    align-items: center;
    gap: 7px;
    width: 93px;
    padding-left: 65px;
  }

  .chevron {
    margin-left: 12px;
    padding-bottom: 10px;
  }

  .task {
    width: 156px;
    height: 27px;
    padding-left: 7px;
    gap: 4px;
    box-sizing: border-box;
    border: 1px solid #777b7f;
    border-radius: 3px;
    background: linear-gradient(#85898d, #4c5054 48%, #14171a 50%, #202428);
  }

  .task.active {
    background: linear-gradient(#3d4145, #1b1e21 48%, #020304 50%, #0b0d0f);
  }

  .tray {
    display: flex;
    align-items: center;
    gap: 3px;
    margin-left: auto;
    padding-right: 12px;
  }

  .language {
    margin-right: 5px;
  }

  .expand {
    margin-left: 8px;
  }

  .power {
    margin-left: 9px;
  }

  .tray time {
    margin-left: 9px;
  }
</style>
